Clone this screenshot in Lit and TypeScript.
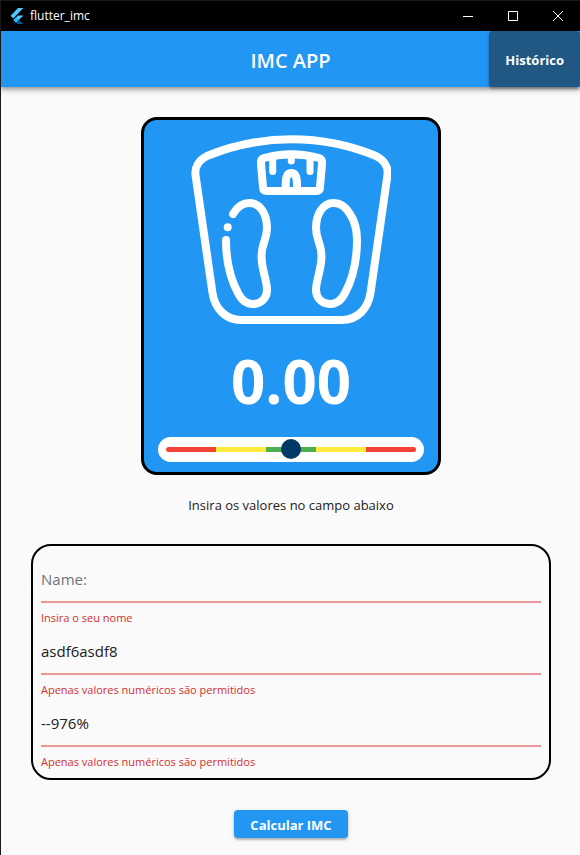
import { LitElement, html, css, svg } from "lit";
import { customElement, property, state } from "lit/decorators.js";

const FONT = css`"Segoe UI", "Open Sans", "Noto Sans", sans-serif`;

@customElement("title-bar")
class TitleBar extends LitElement {
  static styles = css`
    :host {
      display: flex;
      align-items: center;
      height: 30px;
      background: #000;
      color: #fff;
      font: 12px/16px ${FONT};
    }
    .logo {
      width: 14px;
      height: 16px;
      margin: 0 6px 0 9px;
    }
    .name {
      flex: 1;
    }
    .control {
      display: grid;
      place-items: center;
      box-sizing: border-box;
      width: 45px;
      height: 30px;
      padding: 0 0 0 1px;
      border: 0;
      background: none;
      color: inherit;
    }
    .control svg {
      width: 10px;
      height: 10px;
      fill: none;
      stroke: currentColor;
    }
  `;

  render() {
    return html`
      <svg class="logo" viewBox="0 0 14 16" aria-hidden="true">
        <path fill="#54c5f8" d="M8 0H13.4L3.2 10.4L0.6 7.7Z" />
        <path fill="#54c5f8" d="M8 7.4H13.4L8.8 12L6 14.8L3.4 12Z" />
        <path fill="#29b6f6" d="M6.1 9.3L8.8 12L6.1 14.7L3.4 12Z" />
        <path fill="#01579b" d="M6.1 14.7L8.8 12L13.4 16H7.6Z" />
      </svg>
      <span class="name">flutter_imc</span>
      <button class="control" aria-label="Minimizar">
        <svg viewBox="0 0 10 10"><path d="M0 5.5H10" /></svg>
      </button>
      <button class="control" aria-label="Maximizar">
        <svg viewBox="0 0 10 10"><path d="M0.5 0.5H9.5V9.5H0.5Z" /></svg>
      </button>
      <button class="control" aria-label="Fechar">
        <svg viewBox="0 0 10 10"><path d="M0 0L10 10M10 0L0 10" /></svg>
      </button>
    `;
  }
}

const rightFoot = svg`<path
  d="M350 214C346 207 340 203 333.5 203C323 203 316 214 316 228C316 240 321.5 243 321.5 256C321.5 270 316 280 316 290C316 298 322 304 330 304C337 304 342 299 345 293C352 280 357 262 357 240C357 230 354 220 350 214Z" />`;

@customElement("imc-card")
class ImcCard extends LitElement {
  @property({ type: Number }) value = 0;

  static styles = css`
    :host {
      display: flex;
      flex-direction: column;
      align-items: center;
      box-sizing: border-box;
      width: 300px;
      padding: 15px 14px 10px;
      border: 3px solid #000;
      border-radius: 16px;
      background: #2196f3;
      color: #fff;
      font-family: ${FONT};
    }
    .scale {
      width: 200px;
      height: 190px;
      fill: none;
      stroke: #fff;
      stroke-width: 8;
      stroke-linecap: round;
      stroke-linejoin: round;
    }
    .ticks {
      stroke-width: 7;
    }
    .value {
      margin: 14px 0;
      font-size: 60px;
      line-height: 84px;
      font-weight: 700;
    }
    .range {
      appearance: none;
      box-sizing: border-box;
      width: 100%;
      height: 25px;
      margin: 0;
      padding: 0 8px;
      border-radius: 13px;
      background: #fff;
    }
    .range::-webkit-slider-runnable-track {
      height: 5px;
      border-radius: 3px;
      background: linear-gradient(
        90deg,
        #f44336 20%,
        #ffeb3b 20% 40%,
        #4caf50 40% 60%,
        #ffeb3b 60% 80%,
        #f44336 80%
      );
    }
    .range::-webkit-slider-thumb {
      appearance: none;
      width: 20px;
      height: 20px;
      margin-top: -8px;
      border-radius: 50%;
      background: #003966;
    }
  `;

  render() {
    return html`
      <svg class="scale" viewBox="191 135 200 190" aria-hidden="true">
        <path
          d="M207 156A222 222 0 0 1 376 156C384 160 388.5 167 387.5 175L370.5 293C368 309 357 320 342 320H241C226 320 215 309 212.5 293L195.5 175C194.5 167 199 160 207 156Z"
        />
        <path
          d="M264 158Q291.5 150.5 319 158Q322.5 159 322 164L320 187Q320 191 316 191H267Q263 191 263 187L261 164Q260.5 159 264 158Z"
        />
        <path class="ticks" d="M272.7 159V171.5M310 159V171.5M291.3 155V161" />
        <path d="M285.7 190V184C285.7 176 288 173 291.3 173S297 176 297 184V190" />
        <path
          d="M233 214C237 207 243 203 249.5 203C260 203 267 214 267 228C267 240 261.5 243 261.5 256C261.5 270 267 280 267 290C267 298 261 304 253 304C246 304 241 299 238 293C231 280 226 262 226 240"
        />
        <path d="M227.7 227.3V227.3" />
        ${rightFoot}
      </svg>
      <output class="value">${this.value.toFixed(2)}</output>
      <input class="range" type="range" min="0" max="50" value="25" aria-label="Faixa do IMC" />
    `;
  }
}

interface Field {
  id: string;
  label: string;
  value: string;
  error: string;
}

@customElement("app-root")
class AppRoot extends LitElement {
  @state() private fields: Field[] = [
    { id: "name", label: "Name:", value: "", error: "Insira o seu nome" },
    {
      id: "weight",
      label: "Peso:",
      value: "asdf6asdf8",
      error: "Apenas valores numéricos são permitidos",
    },
    {
      id: "height",
      label: "Altura:",
      value: "--976%",
      error: "Apenas valores numéricos são permitidos",
    },
  ];

  static styles = css`
    :host {
      display: flex;
      flex-direction: column;
      box-sizing: border-box;
      min-height: 100vh;
      border: solid #1a1a1a;
      border-width: 1px 0 0 1px;
      background: #fafafa;
      color: #212121;
      font-family: ${FONT};
    }
    .appbar {
      display: grid;
      grid-template-columns: 1fr auto 1fr;
      align-items: center;
      height: 56px;
      background: #2196f3;
      color: #fff;
      box-shadow: 0 2px 4px rgba(0, 0, 0, 0.3), 0 4px 6px rgba(0, 0, 0, 0.14);
    }
    .title {
      grid-column: 2;
      margin: 0;
      padding-top: 4px;
      font-size: 20px;
      line-height: 24px;
      font-weight: 600;
    }
    .button {
      border: 0;
      border-radius: 4px;
      padding: 0 16px;
      color: #fff;
      font: 700 13px/20px ${FONT};
      box-shadow: 0 2px 2px rgba(0, 0, 0, 0.2), 0 1px 4px rgba(0, 0, 0, 0.16);
    }
    .history {
      justify-self: end;
      height: 56px;
      padding-top: 2px;
      background: #205783;
    }
    .submit {
      height: 28px;
      padding-top: 2px;
      background: #2196f3;
    }
    .content {
      display: flex;
      flex-direction: column;
      align-items: center;
      padding: 30px 29px 16px 30px;
    }
    .hint {
      margin: 20px 0 29px;
      font-size: 13px;
      line-height: 20px;
    }
    .form {
      display: flex;
      flex-direction: column;
      align-items: center;
      gap: 30px;
      width: 100%;
    }
    .fields {
      box-sizing: border-box;
      width: 100%;
      min-width: 0;
      margin: 0;
      padding: 8px;
      border: 2px solid #000;
      border-radius: 20px;
    }
    .input {
      display: block;
      box-sizing: border-box;
      width: 100%;
      height: 49px;
      margin: 0;
      padding: 2px 0 0;
      border: 0;
      border-bottom: 2px solid #e99696;
      border-radius: 0;
      outline: 0;
      background: none;
      color: #212121;
      font: 15px/24px ${FONT};
    }
    .input::placeholder {
      color: #737373;
      opacity: 1;
    }
    .error {
      margin: 0;
      padding-top: 7px;
      color: #d32f2f;
      font-size: 11px;
      line-height: 16px;
    }
  `;

  private edit(index: number, event: Event) {
    const value = (event.target as HTMLInputElement).value;
    this.fields = this.fields.map((f, i) => (i === index ? { ...f, value } : f));
  }

  render() {
    return html`
      <title-bar></title-bar>
      <header class="appbar">
        <h1 class="title">IMC APP</h1>
        <button class="button history">Histórico</button>
      </header>
      <main class="content">
        <imc-card></imc-card>
        <p class="hint">Insira os valores no campo abaixo</p>
        <form class="form" @submit=${(e: Event) => e.preventDefault()}>
          <fieldset class="fields">
            ${this.fields.map(
              (f, i) => html`
                <input
                  class="input"
                  id=${f.id}
                  aria-label=${f.label}
                  aria-invalid="true"
                  aria-describedby="${f.id}-error"
                  placeholder=${f.label}
                  .value=${f.value}
                  @input=${(e: Event) => this.edit(i, e)}
                />
                <p class="error" id="${f.id}-error">${f.error}</p>
              `
            )}
          </fieldset>
          <button class="button submit">Calcular IMC</button>
        </form>
      </main>
    `;
  }
}
